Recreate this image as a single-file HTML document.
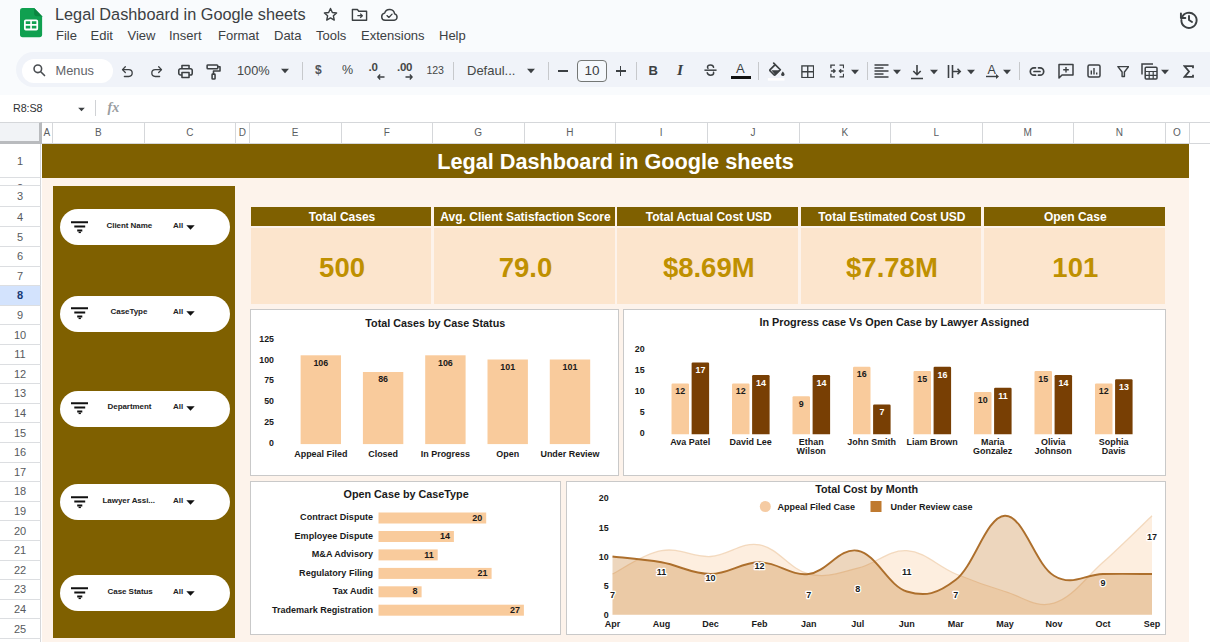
<!DOCTYPE html>
<html>
<head>
<meta charset="utf-8">
<title>Legal Dashboard in Google sheets</title>
<style>
*{box-sizing:border-box;margin:0;padding:0}
html,body{width:1210px;height:642px;overflow:hidden;background:#f9fbfd;font-family:"Liberation Sans",sans-serif;color:#1f1f1f}
.abs{position:absolute}
#app{position:relative;width:1210px;height:642px;overflow:hidden;background:#f9fbfd}
/* header */
#doctitle{left:55px;top:5.2px;font-size:16.3px;color:#3c4043;letter-spacing:0;white-space:nowrap}
.menu{top:27.8px;font-size:13px;color:#3c4043;white-space:nowrap}
#toolbar{left:16px;top:52.3px;width:1240px;height:35.2px;background:#f0f3f9;border-radius:17.6px}
#menus{left:22px;top:58.5px;width:91px;height:24px;background:#fff;border-radius:12px}
.tbtxt{font-size:13px;color:#444746;white-space:nowrap}
.sep{width:1px;height:18px;background:#c7c9cc;top:61px}
/* formula bar */
#fbar{left:0;top:95px;width:1210px;height:27px;background:#fff}
/* grid */
#grid{left:0;top:122px;width:1210px;height:520px;background:#fff}
.colh{top:121.5px;height:22px;background:#fff;border-right:1px solid #d5d7da;border-top:1px solid #d5d7da;border-bottom:1px solid #d5d7da;font-size:10px;color:#5b5e62;text-align:center;line-height:20px}
.rowh{left:0;width:41px;background:#fff;border-bottom:1px solid #dcdee1;border-right:1px solid #d5d7da;font-size:11px;color:#575a5d;text-align:center}
#sheetbg{left:42px;top:178px;width:1147px;height:464px;background:#fdf3eb}
#banner{left:42px;top:143.5px;width:1147px;height:34.5px;background:#7f6000;color:#fff;font-weight:bold;font-size:21.7px;text-align:center;line-height:35.5px}
#side{left:53px;top:185.6px;width:182px;height:452.6px;background:#7f6000}
.pill{left:59.5px;width:170.5px;height:36px;background:#fff;border-radius:18px}
.pill span{position:absolute;font-size:8px;font-weight:bold;color:#222;white-space:nowrap;top:11.5px;letter-spacing:-0.05px}
.kh{top:207px;height:18.5px;background:#7f6000;color:#fff;font-weight:bold;font-size:12px;text-align:center;line-height:20.5px;white-space:nowrap;padding-left:2px}
.kv{top:228px;height:76px;background:#fce5cd;color:#bf9000;font-weight:bold;font-size:27.5px;text-align:center;line-height:80px;padding-left:2px}
.card{background:#fff;border:1px solid #c9c9c9}
.ct{position:absolute;left:0;width:100%;text-align:center;font-weight:bold;color:#1a1a1a;white-space:nowrap}
svg text{font-family:"Liberation Sans",sans-serif;font-weight:bold}
</style>
</head>
<body>
<div id="app">
<!--HEADER-->
<!-- sheets logo -->
<svg class="abs" style="left:19.6px;top:7.4px" width="23" height="31.2" viewBox="0 0 26 34" preserveAspectRatio="none">
<path d="M3 1h13l9 9v20a3 3 0 0 1-3 3H3a3 3 0 0 1-3-3V4a3 3 0 0 1 3-3z" fill="#10a050"/>
<path d="M16 1l9 9h-6a3 3 0 0 1-3-3z" fill="#0b8541"/>
<rect x="5.5" y="14.5" width="14" height="10" rx="1" fill="none" stroke="#fff" stroke-width="2"/>
<path d="M12.5 14.5v10M5.5 19.5h14" stroke="#fff" stroke-width="1.8"/>
</svg>
<div class="abs" id="doctitle">Legal Dashboard in Google sheets</div>
<!-- star -->
<svg class="abs" style="left:322px;top:6px" width="17" height="17" viewBox="0 0 24 24" fill="none" stroke="#3c4043" stroke-width="2" stroke-linejoin="round"><path d="M12 3.5l2.6 5.6 6 .7-4.5 4.1 1.2 6-5.3-3-5.3 3 1.2-6L3.4 9.8l6-.7z"/></svg>
<!-- folder move -->
<svg class="abs" style="left:351px;top:7px" width="17" height="15" viewBox="0 0 24 20" fill="none" stroke="#3c4043" stroke-width="2" stroke-linejoin="round"><path d="M2 3h7l2 2.5h11V18H2z"/><path d="M9 11.7h6M13 8.8l3 2.9-3 2.9" stroke-width="1.8"/></svg>
<!-- cloud -->
<svg class="abs" style="left:380px;top:7px" width="19" height="15" viewBox="0 0 26 20" fill="none" stroke="#3c4043" stroke-width="2" stroke-linejoin="round" stroke-linecap="round"><path d="M7 18a5 5 0 0 1-.6-9.9A7 7 0 0 1 20 9.2a4.5 4.5 0 0 1-.6 8.8z"/><path d="M9.5 11.5l2.6 2.5 4.4-4.5" stroke-width="1.8"/></svg>
<div class="abs menu" style="left:56px">File</div>
<div class="abs menu" style="left:90.5px">Edit</div>
<div class="abs menu" style="left:127.5px">View</div>
<div class="abs menu" style="left:169px">Insert</div>
<div class="abs menu" style="left:218px">Format</div>
<div class="abs menu" style="left:274px">Data</div>
<div class="abs menu" style="left:316px">Tools</div>
<div class="abs menu" style="left:361px">Extensions</div>
<div class="abs menu" style="left:439px">Help</div>
<!-- history -->
<svg class="abs" style="left:1178px;top:9px" width="22" height="22" viewBox="0 0 24 24" fill="none" stroke="#3c4043" stroke-width="2.1" stroke-linecap="round" stroke-linejoin="round"><path d="M4.2 9.5A8.3 8.3 0 1 1 3.7 12"/><path d="M3.2 5v4.8H8" /><path d="M12 7.5V12l3.3 2.2"/></svg>

<!--TOOLBAR-->
<div class="abs" id="toolbar"></div>
<div class="abs" id="menus"></div>
<div class="abs" style="left:0;top:0.9px;width:1210px;height:0">
<svg class="abs" style="left:31.5px;top:62.3px" width="14" height="14" viewBox="0 0 24 24" fill="none" stroke="#4a4e52" stroke-width="2.7" stroke-linecap="round"><circle cx="10" cy="10" r="6.5"/><path d="M15 15l6.5 6.5"/></svg>
<div class="abs tbtxt" style="left:55.5px;top:62.3px;font-size:12.8px;color:#5f6368">Menus</div>
<!-- undo -->
<svg class="abs" style="left:120px;top:63px" width="15" height="15" viewBox="0 0 24 24" fill="none" stroke="#3c4043" stroke-width="2.1" stroke-linecap="round" stroke-linejoin="round"><path d="M8.5 4.5L4 9l4.500 4.500"/><path d="M4.500 9H14a5.500 5.500 0 0 1 0 11H7"/></svg>
<!-- redo -->
<svg class="abs" style="left:149px;top:63px" width="15" height="15" viewBox="0 0 24 24" fill="none" stroke="#3c4043" stroke-width="2.1" stroke-linecap="round" stroke-linejoin="round"><path d="M15.500 4.500L20 9l-4.500 4.500"/><path d="M19.500 9H10a5.500 5.500 0 0 0 0 11h7"/></svg>
<!-- print -->
<svg class="abs" style="left:177px;top:62px" width="17" height="17" viewBox="0 0 24 24" fill="none" stroke="#3c4043" stroke-width="2.2" stroke-linejoin="round"><path d="M7 8V3.500h10V8"/><rect x="2.500" y="8" width="19" height="9" rx="2.500"/><rect x="7" y="13.500" width="10" height="7" fill="#f0f4f9"/></svg>
<!-- paint format -->
<svg class="abs" style="left:205px;top:62px" width="17" height="18" viewBox="0 0 24 25" fill="none" stroke="#3c4043" stroke-width="2.2" stroke-linejoin="round"><rect x="3" y="2.500" width="15" height="5.500" rx="1.200"/><path d="M18 5.200h3.200v6H12v4.500"/><rect x="10" y="15.500" width="4.200" height="7" rx="1"/></svg>
<div class="abs tbtxt" style="left:237px;top:62.5px;font-size:12.8px">100%</div>
<svg class="abs" style="left:280px;top:67px" width="10" height="6" viewBox="0 0 10 6"><path d="M1 .8h8L5 5.200z" fill="#3c4043"/></svg>
<div class="abs sep" style="left:302px"></div>
<div class="abs tbtxt" style="left:315px;top:62px;font-size:12px;font-weight:bold;color:#50545a">$</div>
<div class="abs tbtxt" style="left:342px;top:62px;font-size:12.500px">%</div>
<div class="abs tbtxt" style="left:368.500px;top:60.500px;font-size:11.500px;font-weight:bold;letter-spacing:-0.3px">.0</div>
<svg class="abs" style="left:377px;top:73px" width="8" height="6" viewBox="0 0 8 6" fill="none" stroke="#3c4043" stroke-width="1.400"><path d="M7.500 3H1M3.200 .6L.9 3l2.300 2.400"/></svg>
<div class="abs tbtxt" style="left:397px;top:60.500px;font-size:11.500px;font-weight:bold;letter-spacing:-0.3px">.00</div>
<svg class="abs" style="left:405px;top:73px" width="8" height="6" viewBox="0 0 8 6" fill="none" stroke="#3c4043" stroke-width="1.400"><path d="M.5 3H7M4.800 .6L7.100 3 4.800 5.400"/></svg>
<div class="abs tbtxt" style="left:426.500px;top:63.5px;font-size:10.600px;letter-spacing:-0.2px">123</div>
<div class="abs sep" style="left:453px"></div>
<div class="abs tbtxt" style="left:467px;top:62.3px;font-size:13px">Defaul...</div>
<svg class="abs" style="left:526px;top:67px" width="10" height="6" viewBox="0 0 10 6"><path d="M1 .8h8L5 5.200z" fill="#3c4043"/></svg>
<div class="abs sep" style="left:548px"></div>
<div class="abs" style="left:558px;top:69.600px;width:10px;height:1.400px;background:#3c4043"></div>
<div class="abs" style="left:577px;top:59px;width:30px;height:22px;border:1.200px solid #747775;border-radius:4px;background:#f5f8fc;text-align:center;font-size:13.500px;line-height:20px;color:#3c4043">10</div>
<div class="abs" style="left:615.500px;top:69.500px;width:10px;height:1.600px;background:#3c4043"></div>
<div class="abs" style="left:619.700px;top:65.300px;width:1.600px;height:10px;background:#3c4043"></div>
<div class="abs sep" style="left:636px"></div>
<div class="abs tbtxt" style="left:648.500px;top:62px;font-size:13px;font-weight:bold;color:#3c4043">B</div>
<div class="abs tbtxt" style="left:677px;top:60.5px;font-size:15.5px;font-style:italic;font-family:'Liberation Serif',serif;font-weight:bold;color:#3c4043">I</div>
<!-- strikethrough -->
<svg class="abs" style="left:702.5px;top:62.6px" width="15" height="14" viewBox="0 0 16 15" fill="none" stroke="#3c4043" stroke-width="1.6" stroke-linecap="round"><path d="M11.3 4.6C11.1 3 9.800 2.100 8 2.100C6.100 2.100 4.800 3 4.800 4.400C4.800 4.900 5 5.300 5.300 5.600"/><path d="M1.500 7.700h13" stroke-linecap="butt"/><path d="M4.500 10.400C4.700 12 6.100 13 8 13C10 13 11.400 12.100 11.400 10.700C11.400 10.400 11.300 10.100 11.200 9.900"/></svg>
<!-- text color -->
<div class="abs tbtxt" style="left:736px;top:60px;font-size:13px;color:#3c4043">A</div>
<div class="abs" style="left:730.500px;top:75px;width:20px;height:2.8px;background:#111"></div>
<div class="abs sep" style="left:758px"></div>
<!-- fill color -->
<svg class="abs" style="left:767px;top:60px" width="20" height="20" viewBox="0 0 24 24"><path d="M6.500 2.500l8 8-6 6a1.200 1.200 0 0 1-1.700 0L2.300 12a1.200 1.200 0 0 1 0-1.700l6-6z" fill="none" stroke="#3c4043" stroke-width="2.100" stroke-linejoin="round" transform="translate(1.500,0)"/><path d="M3.800 11h10.800l-6.200 5.800z" fill="#3c4043" transform="translate(1.500,0)"/><path d="M19 12.500s2 2.300 2 3.600a2 2 0 0 1-4 0c0-1.300 2-3.600 2-3.600z" fill="#3c4043"/><rect x="1" y="20.500" width="20" height="3" fill="#fff"/></svg>
<!-- borders -->
<svg class="abs" style="left:800.5px;top:63.8px" width="13.5" height="13.5" viewBox="0 0 15 15" fill="none" stroke="#3c4043" stroke-width="1.500"><rect x="1" y="1" width="13" height="13"/><path d="M7.500 1v13M1 7.500h13"/></svg>
<!-- merge -->
<svg class="abs" style="left:829.5px;top:63.5px" width="14.5" height="14" viewBox="0 0 16 15" fill="none" stroke="#3c4043" stroke-width="1.500"><path d="M1 4.500V1h4.500M10.500 1H15v3.500M1 10.500V14h4.500M10.500 14H15v-3.500"/><path d="M1 7.500h4.500M3.700 5.500l2 2-2 2M15 7.500h-4.500M12.300 5.500l-2 2 2 2" stroke-width="1.400"/></svg>
<svg class="abs" style="left:850px;top:68px" width="10" height="6" viewBox="0 0 10 6"><path d="M1 .8h8L5 5.200z" fill="#3c4043"/></svg>
<div class="abs sep" style="left:867px"></div>
<!-- h align -->
<svg class="abs" style="left:874px;top:63.500px" width="15" height="14" viewBox="0 0 15 14" stroke="#3c4043" stroke-width="1.400"><path d="M.5 1h14M.5 4h9M.5 7h14M.5 10h9M.5 13h14"/></svg>
<svg class="abs" style="left:892px;top:68px" width="10" height="6" viewBox="0 0 10 6"><path d="M1 .8h8L5 5.200z" fill="#3c4043"/></svg>
<!-- v align -->
<svg class="abs" style="left:910px;top:63px" width="14" height="16" viewBox="0 0 14 16" fill="none" stroke="#3c4043" stroke-width="1.600"><path d="M7 1v9.500M3.300 7L7 10.700 10.700 7M1 14.500h12"/></svg>
<svg class="abs" style="left:929px;top:68px" width="10" height="6" viewBox="0 0 10 6"><path d="M1 .8h8L5 5.200z" fill="#3c4043"/></svg>
<!-- wrap -->
<svg class="abs" style="left:947px;top:63px" width="15" height="15" viewBox="0 0 15 15" fill="none" stroke="#3c4043" stroke-width="1.600"><path d="M1.500 1v13M5.500 1v13M5.500 7.500h7.500M10.500 4.800l2.700 2.700-2.700 2.700"/></svg>
<svg class="abs" style="left:966px;top:68px" width="10" height="6" viewBox="0 0 10 6"><path d="M1 .8h8L5 5.200z" fill="#3c4043"/></svg>
<!-- rotate -->
<div class="abs tbtxt" style="left:987.5px;top:62px;font-size:12.500px;color:#3c4043">A</div>
<svg class="abs" style="left:985.500px;top:73.500px" width="14" height="6" viewBox="0 0 14 6" fill="none" stroke="#3c4043" stroke-width="1.400"><path d="M0 2.500h11.500"/><path d="M10 0l3 2.500L10 5z" fill="#3c4043" stroke="none"/></svg>
<svg class="abs" style="left:1002px;top:68px" width="10" height="6" viewBox="0 0 10 6"><path d="M1 .8h8L5 5.200z" fill="#3c4043"/></svg>
<div class="abs sep" style="left:1019px"></div>
<!-- link -->
<svg class="abs" style="left:1029px;top:65px" width="16" height="11" viewBox="0 0 16 11" fill="none" stroke="#3c4043" stroke-width="1.700" stroke-linecap="round"><path d="M6.500 1.800H5a3.700 3.700 0 0 0 0 7.400h1.500M9.500 1.800H11a3.700 3.700 0 0 1 0 7.400H9.500M5 5.500h6"/></svg>
<!-- comment -->
<svg class="abs" style="left:1057.500px;top:62.500px" width="16" height="16" viewBox="0 0 16 16" fill="none" stroke="#3c4043" stroke-width="1.500" stroke-linejoin="round"><path d="M1 1.500h14v10.500H4L1 15z"/><path d="M8 4v5.500M5.200 6.800h5.600" stroke-width="1.400"/></svg>
<!-- chart -->
<svg class="abs" style="left:1087px;top:63.500px" width="14" height="14" viewBox="0 0 14 14" fill="none" stroke="#3c4043" stroke-width="1.500"><rect x="1" y="1" width="12" height="12" rx="1.500"/><path d="M4.300 10.500V6.500M7 10.500V4M9.700 10.500V8.500" stroke-width="1.400"/></svg>
<!-- filter -->
<svg class="abs" style="left:1116.5px;top:64px" width="12.5" height="13" viewBox="0 0 14 14" fill="none" stroke="#3c4043" stroke-width="1.600" stroke-linejoin="round"><path d="M1 1.500h12L8.300 7.500V12.500H5.700V7.500z"/></svg>
<!-- table/functions -->
<svg class="abs" style="left:1141px;top:62.500px" width="17" height="17" viewBox="0 0 17 17" fill="none" stroke="#3c4043" stroke-width="1.500"><path d="M1 11.500V1h11"/><rect x="4.200" y="4.200" width="11.800" height="11.800" rx="1"/><path d="M4.200 8.500H16M8.200 8.500V16M12.200 8.500V16M4.200 12.300H16" stroke-width="1.200"/></svg>
<svg class="abs" style="left:1160px;top:68px" width="10" height="6" viewBox="0 0 10 6"><path d="M1 .8h8L5 5.200z" fill="#3c4043"/></svg>
<!-- sigma -->
<svg class="abs" style="left:1183px;top:64px" width="11" height="13" viewBox="0 0 11 13" fill="none" stroke="#3c4043" stroke-width="1.800" stroke-linejoin="miter"><path d="M10 3.200V1.200H1.500L6 6.500 1.500 11.800H10V9.800"/></svg>

</div>
<!--FBAR-->
<!--GRID-->
<div class="abs" id="fbar"></div>
<div class="abs" id="grid"></div>
<div class="abs" style="left:0;top:122px;width:42px;height:22px;background:#f1f3f6;border-right:3px solid #b9bbbe;border-bottom:3px solid #b9bbbe;border-top:1px solid #d5d7da"></div>
<div class="abs colh" style="left:41.5px;width:11.5px">A</div>
<div class="abs colh" style="left:53.0px;width:91.5px">B</div>
<div class="abs colh" style="left:144.5px;width:91.5px">C</div>
<div class="abs colh" style="left:236.0px;width:13.5px">D</div>
<div class="abs colh" style="left:249.5px;width:92.0px">E</div>
<div class="abs colh" style="left:341.5px;width:91.5px">F</div>
<div class="abs colh" style="left:433.0px;width:91.5px">G</div>
<div class="abs colh" style="left:524.5px;width:91.5px">H</div>
<div class="abs colh" style="left:616.0px;width:91.5px">I</div>
<div class="abs colh" style="left:707.5px;width:92.0px">J</div>
<div class="abs colh" style="left:799.5px;width:91.5px">K</div>
<div class="abs colh" style="left:891.0px;width:91.5px">L</div>
<div class="abs colh" style="left:982.5px;width:91.5px">M</div>
<div class="abs colh" style="left:1074.0px;width:91.5px">N</div>
<div class="abs colh" style="left:1165.5px;width:24.0px">O</div>
<div class="abs colh" style="left:1189.5px;width:21px;border-right:none"></div>
<div class="abs rowh" style="top:144.0px;height:34.0px;line-height:34.0px;">1</div>
<div class="abs rowh" style="top:178.0px;height:7.5px;line-height:7.5px;overflow:hidden;line-height:12px;padding-top:3.5px;">2</div>
<div class="abs rowh" style="top:185.5px;height:21.5px;line-height:21.5px;">3</div>
<div class="abs rowh" style="top:207.0px;height:20.0px;line-height:20.0px;">4</div>
<div class="abs rowh" style="top:227.0px;height:20.0px;line-height:20.0px;">5</div>
<div class="abs rowh" style="top:247.0px;height:19.5px;line-height:19.5px;">6</div>
<div class="abs rowh" style="top:266.5px;height:19.5px;line-height:19.5px;">7</div>
<div class="abs rowh" style="top:286.0px;height:19.5px;line-height:19.5px;background:#d3e3fd;color:#173a75;font-weight:bold;">8</div>
<div class="abs rowh" style="top:305.5px;height:19.5px;line-height:19.5px;">9</div>
<div class="abs rowh" style="top:325.0px;height:20.0px;line-height:20.0px;">10</div>
<div class="abs rowh" style="top:345.0px;height:19.5px;line-height:19.5px;">11</div>
<div class="abs rowh" style="top:364.5px;height:19.5px;line-height:19.5px;">12</div>
<div class="abs rowh" style="top:384.0px;height:19.5px;line-height:19.5px;">13</div>
<div class="abs rowh" style="top:403.5px;height:19.5px;line-height:19.5px;">14</div>
<div class="abs rowh" style="top:423.0px;height:20.0px;line-height:20.0px;">15</div>
<div class="abs rowh" style="top:443.0px;height:19.5px;line-height:19.5px;">16</div>
<div class="abs rowh" style="top:462.5px;height:19.5px;line-height:19.5px;">17</div>
<div class="abs rowh" style="top:482.0px;height:19.5px;line-height:19.5px;">18</div>
<div class="abs rowh" style="top:501.5px;height:19.5px;line-height:19.5px;">19</div>
<div class="abs rowh" style="top:521.0px;height:20.0px;line-height:20.0px;">20</div>
<div class="abs rowh" style="top:541.0px;height:19.5px;line-height:19.5px;">21</div>
<div class="abs rowh" style="top:560.5px;height:19.5px;line-height:19.5px;">22</div>
<div class="abs rowh" style="top:580.0px;height:19.5px;line-height:19.5px;">23</div>
<div class="abs rowh" style="top:599.5px;height:19.5px;line-height:19.5px;">24</div>
<div class="abs rowh" style="top:619.0px;height:20.0px;line-height:20.0px;">25</div>
<div class="abs rowh" style="top:639.0px;height:19.5px;line-height:19.5px;">26</div>
<div class="abs rowh" style="top:658.5px;height:19.5px;line-height:19.5px;">27</div>
<div class="abs" id="sheetbg"></div>
<div class="abs" id="banner">Legal Dashboard in Google sheets</div>
<div class="abs" style="left:13px;top:101.5px;font-size:10.8px;color:#303134;letter-spacing:-0.1px">R8:S8</div>
<svg class="abs" style="left:77px;top:106.5px" width="9" height="5" viewBox="0 0 10 6"><path d="M1 .8h8L5 5.200z" fill="#3c4043"/></svg>
<div class="abs" style="left:95px;top:100px;width:1px;height:16px;background:#d0d2d5"></div>
<div class="abs" style="left:107.5px;top:100px;font-size:14px;font-style:italic;font-weight:bold;font-family:'Liberation Serif',serif;color:#9a9da1">fx</div>

<!--SIDE-->
<div class="abs" id="side"></div>
<div class="abs pill" style="top:209px"><svg style="position:absolute;left:11px;top:11.5px" width="17.5" height="13" viewBox="0 0 17.5 13" stroke="#111" stroke-width="2" stroke-linecap="butt"><path d="M0 1.200h17.500M3.300 5.500h10.900M6.200 9.600h5.100"/><path d="M7.600 11.400h2.300" stroke-width="1.400"/></svg><span style="left:47px">Client Name</span><span style="left:113.500px">All</span><svg style="position:absolute;left:126px;top:15.5px" width="9" height="5" viewBox="0 0 9 5"><path d="M.3 .3h8.400L4.500 4.700z" fill="#111"/></svg></div>
<div class="abs pill" style="top:295.5px"><svg style="position:absolute;left:11px;top:11.5px" width="17.5" height="13" viewBox="0 0 17.5 13" stroke="#111" stroke-width="2" stroke-linecap="butt"><path d="M0 1.200h17.500M3.300 5.500h10.900M6.200 9.600h5.100"/><path d="M7.600 11.400h2.300" stroke-width="1.400"/></svg><span style="left:51px">CaseType</span><span style="left:113.500px">All</span><svg style="position:absolute;left:126px;top:15.5px" width="9" height="5" viewBox="0 0 9 5"><path d="M.3 .3h8.400L4.500 4.700z" fill="#111"/></svg></div>
<div class="abs pill" style="top:390.5px"><svg style="position:absolute;left:11px;top:11.5px" width="17.5" height="13" viewBox="0 0 17.5 13" stroke="#111" stroke-width="2" stroke-linecap="butt"><path d="M0 1.200h17.500M3.300 5.500h10.900M6.200 9.600h5.100"/><path d="M7.600 11.400h2.300" stroke-width="1.400"/></svg><span style="left:48px">Department</span><span style="left:113.500px">All</span><svg style="position:absolute;left:126px;top:15.5px" width="9" height="5" viewBox="0 0 9 5"><path d="M.3 .3h8.400L4.500 4.700z" fill="#111"/></svg></div>
<div class="abs pill" style="top:484px"><svg style="position:absolute;left:11px;top:11.5px" width="17.5" height="13" viewBox="0 0 17.5 13" stroke="#111" stroke-width="2" stroke-linecap="butt"><path d="M0 1.200h17.500M3.300 5.500h10.900M6.200 9.600h5.100"/><path d="M7.600 11.400h2.300" stroke-width="1.400"/></svg><span style="left:43px">Lawyer Assi...</span><span style="left:113.500px">All</span><svg style="position:absolute;left:126px;top:15.5px" width="9" height="5" viewBox="0 0 9 5"><path d="M.3 .3h8.400L4.500 4.700z" fill="#111"/></svg></div>
<div class="abs pill" style="top:575px"><svg style="position:absolute;left:11px;top:11.5px" width="17.5" height="13" viewBox="0 0 17.5 13" stroke="#111" stroke-width="2" stroke-linecap="butt"><path d="M0 1.200h17.500M3.300 5.500h10.900M6.200 9.600h5.100"/><path d="M7.600 11.400h2.300" stroke-width="1.400"/></svg><span style="left:48px">Case Status</span><span style="left:113.500px">All</span><svg style="position:absolute;left:126px;top:15.5px" width="9" height="5" viewBox="0 0 9 5"><path d="M.3 .3h8.400L4.500 4.700z" fill="#111"/></svg></div>
<!--KPI-->
<div class="abs kh" style="left:250.8px;width:180.5px">Total Cases</div>
<div class="abs kv" style="left:250.8px;width:180.5px">500</div>
<div class="abs kh" style="left:434px;width:181px">Avg. Client Satisfaction Score</div>
<div class="abs kv" style="left:434px;width:181px">79.0</div>
<div class="abs kh" style="left:617.3px;width:180.9000000000001px">Total Actual Cost USD</div>
<div class="abs kv" style="left:617.3px;width:180.9000000000001px">$8.69M</div>
<div class="abs kh" style="left:800.6px;width:180.69999999999993px">Total Estimated Cost USD</div>
<div class="abs kv" style="left:800.6px;width:180.69999999999993px">$7.78M</div>
<div class="abs kh" style="left:983.6px;width:181.39999999999998px">Open Case</div>
<div class="abs kv" style="left:983.6px;width:181.39999999999998px">101</div>
<!--CH1-->
<div class="abs card" style="left:250px;top:309px;width:369px;height:166.7px"><svg width="367" height="164.7" viewBox="251 310 367 164.7" style="display:block">
<text x="435.3" y="327.0" font-size="10.8" text-anchor="middle" fill="#1a1a1a" >Total Cases by Case Status</text>
<text x="274.0" y="446.0" font-size="8.8" text-anchor="end" fill="#1a1a1a" >0</text>
<text x="274.0" y="425.2" font-size="8.8" text-anchor="end" fill="#1a1a1a" >25</text>
<text x="274.0" y="404.4" font-size="8.8" text-anchor="end" fill="#1a1a1a" >50</text>
<text x="274.0" y="383.5" font-size="8.8" text-anchor="end" fill="#1a1a1a" >75</text>
<text x="274.0" y="362.7" font-size="8.8" text-anchor="end" fill="#1a1a1a" >100</text>
<text x="274.0" y="341.9" font-size="8.8" text-anchor="end" fill="#1a1a1a" >125</text>
<rect x="300.6" y="355.3" width="40.4" height="88.8" fill="#f9cb9c"/>
<text x="320.8" y="365.7" font-size="8.9" text-anchor="middle" fill="#1a1a1a" >106</text>
<text x="320.8" y="456.7" font-size="8.95" text-anchor="middle" fill="#1a1a1a" >Appeal Filed</text>
<rect x="362.9" y="372.0" width="40.4" height="72.1" fill="#f9cb9c"/>
<text x="383.1" y="382.4" font-size="8.9" text-anchor="middle" fill="#1a1a1a" >86</text>
<text x="383.1" y="456.7" font-size="8.95" text-anchor="middle" fill="#1a1a1a" >Closed</text>
<rect x="425.2" y="355.3" width="40.4" height="88.8" fill="#f9cb9c"/>
<text x="445.4" y="365.7" font-size="8.9" text-anchor="middle" fill="#1a1a1a" >106</text>
<text x="445.4" y="456.7" font-size="8.95" text-anchor="middle" fill="#1a1a1a" >In Progress</text>
<rect x="487.5" y="359.5" width="40.4" height="84.6" fill="#f9cb9c"/>
<text x="507.7" y="369.9" font-size="8.9" text-anchor="middle" fill="#1a1a1a" >101</text>
<text x="507.7" y="456.7" font-size="8.95" text-anchor="middle" fill="#1a1a1a" >Open</text>
<rect x="549.8" y="359.5" width="40.4" height="84.6" fill="#f9cb9c"/>
<text x="570.0" y="369.9" font-size="8.9" text-anchor="middle" fill="#1a1a1a" >101</text>
<text x="570.0" y="456.7" font-size="8.95" text-anchor="middle" fill="#1a1a1a" >Under Review</text>
</svg></div>
<!--CH2-->
<div class="abs card" style="left:623px;top:309px;width:543px;height:166.7px"><svg width="541" height="164.7" viewBox="624 310 541 164.7" style="display:block">
<text x="894.3" y="325.9" font-size="10.85" text-anchor="middle" fill="#1a1a1a" >In Progress case Vs Open Case by Lawyer Assigned</text>
<text x="644.7" y="436.1" font-size="8.9" text-anchor="end" fill="#1a1a1a" >0</text>
<text x="644.7" y="415.1" font-size="8.9" text-anchor="end" fill="#1a1a1a" >5</text>
<text x="644.7" y="394.1" font-size="8.9" text-anchor="end" fill="#1a1a1a" >10</text>
<text x="644.7" y="373.0" font-size="8.9" text-anchor="end" fill="#1a1a1a" >15</text>
<text x="644.7" y="352.0" font-size="8.9" text-anchor="end" fill="#1a1a1a" >20</text>
<path d="M671.5 434.3V384.7q0 -1.2 1.2 -1.2h15.1q1.2 0 1.2 1.2V434.3z" fill="#f9cb9c"/>
<path d="M691.6 434.3V363.7q0 -1.2 1.2 -1.2h15.1q1.2 0 1.2 1.2V434.3z" fill="#783f04"/>
<text x="680.3" y="394.3" font-size="8.9" text-anchor="middle" fill="#1a1a1a" >12</text>
<text x="700.4" y="373.4" font-size="8.9" text-anchor="middle" fill="#fff" >17</text>
<text x="690.2" y="445.2" font-size="8.95" text-anchor="middle" fill="#1a1a1a" >Ava Patel</text>
<path d="M732.0 434.3V384.7q0 -1.2 1.2 -1.2h15.1q1.2 0 1.2 1.2V434.3z" fill="#f9cb9c"/>
<path d="M752.1 434.3V376.3q0 -1.2 1.2 -1.2h15.1q1.2 0 1.2 1.2V434.3z" fill="#783f04"/>
<text x="740.8" y="394.3" font-size="8.9" text-anchor="middle" fill="#1a1a1a" >12</text>
<text x="760.9" y="386.0" font-size="8.9" text-anchor="middle" fill="#fff" >14</text>
<text x="750.7" y="445.2" font-size="8.95" text-anchor="middle" fill="#1a1a1a" >David Lee</text>
<path d="M792.5 434.3V397.4q0 -1.2 1.2 -1.2h15.1q1.2 0 1.2 1.2V434.3z" fill="#f9cb9c"/>
<path d="M812.6 434.3V376.3q0 -1.2 1.2 -1.2h15.1q1.2 0 1.2 1.2V434.3z" fill="#783f04"/>
<text x="801.3" y="407.0" font-size="8.9" text-anchor="middle" fill="#1a1a1a" >9</text>
<text x="821.4" y="386.0" font-size="8.9" text-anchor="middle" fill="#fff" >14</text>
<text x="811.2" y="445.2" font-size="8.95" text-anchor="middle" fill="#1a1a1a" >Ethan</text>
<text x="811.2" y="454.1" font-size="8.95" text-anchor="middle" fill="#1a1a1a" >Wilson</text>
<path d="M853.0 434.3V367.9q0 -1.2 1.2 -1.2h15.1q1.2 0 1.2 1.2V434.3z" fill="#f9cb9c"/>
<path d="M873.1 434.3V405.8q0 -1.2 1.2 -1.2h15.1q1.2 0 1.2 1.2V434.3z" fill="#783f04"/>
<text x="861.8" y="377.5" font-size="8.9" text-anchor="middle" fill="#1a1a1a" >16</text>
<text x="881.9" y="415.5" font-size="8.9" text-anchor="middle" fill="#fff" >7</text>
<text x="871.7" y="445.2" font-size="8.95" text-anchor="middle" fill="#1a1a1a" >John Smith</text>
<path d="M913.5 434.3V372.1q0 -1.2 1.2 -1.2h15.1q1.2 0 1.2 1.2V434.3z" fill="#f9cb9c"/>
<path d="M933.6 434.3V367.9q0 -1.2 1.2 -1.2h15.1q1.2 0 1.2 1.2V434.3z" fill="#783f04"/>
<text x="922.3" y="381.7" font-size="8.9" text-anchor="middle" fill="#1a1a1a" >15</text>
<text x="942.4" y="377.6" font-size="8.9" text-anchor="middle" fill="#fff" >16</text>
<text x="932.2" y="445.2" font-size="8.95" text-anchor="middle" fill="#1a1a1a" >Liam Brown</text>
<path d="M974.0 434.3V393.1q0 -1.2 1.2 -1.2h15.1q1.2 0 1.2 1.2V434.3z" fill="#f9cb9c"/>
<path d="M994.1 434.3V388.9q0 -1.2 1.2 -1.2h15.1q1.2 0 1.2 1.2V434.3z" fill="#783f04"/>
<text x="982.8" y="402.8" font-size="8.9" text-anchor="middle" fill="#1a1a1a" >10</text>
<text x="1002.9" y="398.6" font-size="8.9" text-anchor="middle" fill="#fff" >11</text>
<text x="992.7" y="445.2" font-size="8.95" text-anchor="middle" fill="#1a1a1a" >Maria</text>
<text x="992.7" y="454.1" font-size="8.95" text-anchor="middle" fill="#1a1a1a" >Gonzalez</text>
<path d="M1034.5 434.3V372.1q0 -1.2 1.2 -1.2h15.1q1.2 0 1.2 1.2V434.3z" fill="#f9cb9c"/>
<path d="M1054.6 434.3V376.3q0 -1.2 1.2 -1.2h15.1q1.2 0 1.2 1.2V434.3z" fill="#783f04"/>
<text x="1043.3" y="381.7" font-size="8.9" text-anchor="middle" fill="#1a1a1a" >15</text>
<text x="1063.4" y="386.0" font-size="8.9" text-anchor="middle" fill="#fff" >14</text>
<text x="1053.2" y="445.2" font-size="8.95" text-anchor="middle" fill="#1a1a1a" >Olivia</text>
<text x="1053.2" y="454.1" font-size="8.95" text-anchor="middle" fill="#1a1a1a" >Johnson</text>
<path d="M1095.0 434.3V384.7q0 -1.2 1.2 -1.2h15.1q1.2 0 1.2 1.2V434.3z" fill="#f9cb9c"/>
<path d="M1115.1 434.3V380.5q0 -1.2 1.2 -1.2h15.1q1.2 0 1.2 1.2V434.3z" fill="#783f04"/>
<text x="1103.8" y="394.3" font-size="8.9" text-anchor="middle" fill="#1a1a1a" >12</text>
<text x="1123.9" y="390.2" font-size="8.9" text-anchor="middle" fill="#fff" >13</text>
<text x="1113.7" y="445.2" font-size="8.95" text-anchor="middle" fill="#1a1a1a" >Sophia</text>
<text x="1113.7" y="454.1" font-size="8.95" text-anchor="middle" fill="#1a1a1a" >Davis</text>
</svg></div>
<!--CH3-->
<div class="abs card" style="left:250px;top:480.5px;width:311px;height:154.5px"><svg width="309" height="152.5" viewBox="251 481.5 309 152.5" style="display:block">
<text x="406.1" y="497.0" font-size="10.8" text-anchor="middle" fill="#1a1a1a" >Open Case by CaseType</text>
<rect x="378.5" y="512.0" width="107.7" height="11" fill="#f9cb9c"/>
<text x="373.0" y="519.8" font-size="9.05" text-anchor="end" fill="#1a1a1a" >Contract Dispute</text>
<text x="482.2" y="520.1" font-size="9" text-anchor="end" fill="#1a1a1a" >20</text>
<rect x="378.5" y="530.5" width="75.4" height="11" fill="#f9cb9c"/>
<text x="373.0" y="538.2" font-size="9.05" text-anchor="end" fill="#1a1a1a" >Employee Dispute</text>
<text x="449.9" y="538.5" font-size="9" text-anchor="end" fill="#1a1a1a" >14</text>
<rect x="378.5" y="548.9" width="59.2" height="11" fill="#f9cb9c"/>
<text x="373.0" y="556.7" font-size="9.05" text-anchor="end" fill="#1a1a1a" >M&amp;A Advisory</text>
<text x="433.7" y="557.0" font-size="9" text-anchor="end" fill="#1a1a1a" >11</text>
<rect x="378.5" y="567.4" width="113.1" height="11" fill="#f9cb9c"/>
<text x="373.0" y="575.1" font-size="9.05" text-anchor="end" fill="#1a1a1a" >Regulatory Filing</text>
<text x="487.6" y="575.4" font-size="9" text-anchor="end" fill="#1a1a1a" >21</text>
<rect x="378.5" y="585.8" width="43.1" height="11" fill="#f9cb9c"/>
<text x="373.0" y="593.6" font-size="9.05" text-anchor="end" fill="#1a1a1a" >Tax Audit</text>
<text x="417.6" y="593.9" font-size="9" text-anchor="end" fill="#1a1a1a" >8</text>
<rect x="378.5" y="604.2" width="145.4" height="11" fill="#f9cb9c"/>
<text x="373.0" y="612.0" font-size="9.05" text-anchor="end" fill="#1a1a1a" >Trademark Registration</text>
<text x="519.9" y="612.3" font-size="9" text-anchor="end" fill="#1a1a1a" >27</text>
</svg></div>
<!--CH4-->
<div class="abs card" style="left:566px;top:480.5px;width:600px;height:154.5px"><svg width="598" height="152.5" viewBox="567 481.5 598 152.5" style="display:block">
<text x="866.7" y="492.6" font-size="10.8" text-anchor="middle" fill="#1a1a1a" >Total Cost by Month</text>
<circle cx="765.3" cy="506" r="5.5" fill="#f5cba3"/>
<text x="777.6" y="509.3" font-size="9" text-anchor="start" fill="#1a1a1a" >Appeal Filed Case</text>
<rect x="870.5" y="500.5" width="11" height="11" fill="#bf7a30"/>
<text x="890.4" y="509.3" font-size="9" text-anchor="start" fill="#1a1a1a" >Under Review case</text>
<text x="608.6" y="617.5" font-size="8.9" text-anchor="end" fill="#1a1a1a" >0</text>
<text x="608.6" y="588.4" font-size="8.9" text-anchor="end" fill="#1a1a1a" >5</text>
<text x="608.6" y="559.2" font-size="8.9" text-anchor="end" fill="#1a1a1a" >10</text>
<text x="608.6" y="530.0" font-size="8.9" text-anchor="end" fill="#1a1a1a" >15</text>
<text x="608.6" y="500.9" font-size="8.9" text-anchor="end" fill="#1a1a1a" >20</text>
<path d="M612.5 573.5C621.8 569.1 642.9 553.5 661.5 550.2C680.2 546.8 692.0 557.1 710.6 556.0C729.2 554.9 741.0 541.0 759.6 544.3C778.3 547.7 790.1 569.1 808.7 573.5C827.3 577.9 839.1 572.1 857.8 567.7C876.4 563.2 888.2 549.1 906.8 550.2C925.4 551.3 937.2 565.7 955.8 573.5C974.5 581.2 986.3 585.4 1004.9 591.0C1023.5 596.5 1035.3 608.2 1054.0 602.6C1072.6 597.1 1084.4 578.4 1103.0 561.8C1121.6 545.2 1142.7 524.1 1152.0 515.2L1152.0 614.3 L612.5 614.3Z" fill="#f9cb9c" fill-opacity="0.32"/>
<path d="M612.5 573.5C621.8 569.1 642.9 553.5 661.5 550.2C680.2 546.8 692.0 557.1 710.6 556.0C729.2 554.9 741.0 541.0 759.6 544.3C778.3 547.7 790.1 569.1 808.7 573.5C827.3 577.9 839.1 572.1 857.8 567.7C876.4 563.2 888.2 549.1 906.8 550.2C925.4 551.3 937.2 565.7 955.8 573.5C974.5 581.2 986.3 585.4 1004.9 591.0C1023.5 596.5 1035.3 608.2 1054.0 602.6C1072.6 597.1 1084.4 578.4 1103.0 561.8C1121.6 545.2 1142.7 524.1 1152.0 515.2" fill="none" stroke="#f1d3b5" stroke-width="1.3" stroke-opacity="0.85"/>
<path d="M612.5 556.0C621.8 557.1 642.9 558.5 661.5 561.8C680.2 565.2 692.0 573.5 710.6 573.5C729.2 573.5 741.0 561.8 759.6 561.8C778.3 561.8 790.1 575.7 808.7 573.5C827.3 571.3 839.1 546.8 857.8 550.2C876.4 553.5 888.2 585.4 906.8 591.0C925.4 596.5 937.2 593.7 955.8 579.3C974.5 564.9 986.3 516.0 1004.9 515.2C1023.5 514.4 1035.3 564.2 1054.0 575.2C1072.6 586.3 1084.4 573.8 1103.0 573.5C1121.6 573.2 1142.7 573.5 1152.0 573.5L1152.0 614.3 L612.5 614.3Z" fill="#c37626" fill-opacity="0.3"/>
<path d="M612.5 556.0C621.8 557.1 642.9 558.5 661.5 561.8C680.2 565.2 692.0 573.5 710.6 573.5C729.2 573.5 741.0 561.8 759.6 561.8C778.3 561.8 790.1 575.7 808.7 573.5C827.3 571.3 839.1 546.8 857.8 550.2C876.4 553.5 888.2 585.4 906.8 591.0C925.4 596.5 937.2 593.7 955.8 579.3C974.5 564.9 986.3 516.0 1004.9 515.2C1023.5 514.4 1035.3 564.2 1054.0 575.2C1072.6 586.3 1084.4 573.8 1103.0 573.5C1121.6 573.2 1142.7 573.5 1152.0 573.5" fill="none" stroke="#ad6f2c" stroke-width="1.9"/>
<text x="612.5" y="597.6" font-size="9" text-anchor="middle" fill="#1a1a1a" stroke="#fff" stroke-width="2.6" paint-order="stroke" stroke-linejoin="round">7</text>
<text x="661.5" y="574.3" font-size="9" text-anchor="middle" fill="#1a1a1a" stroke="#fff" stroke-width="2.6" paint-order="stroke" stroke-linejoin="round">11</text>
<text x="710.6" y="580.1" font-size="9" text-anchor="middle" fill="#1a1a1a" stroke="#fff" stroke-width="2.6" paint-order="stroke" stroke-linejoin="round">10</text>
<text x="759.6" y="568.4" font-size="9" text-anchor="middle" fill="#1a1a1a" stroke="#fff" stroke-width="2.6" paint-order="stroke" stroke-linejoin="round">12</text>
<text x="808.7" y="597.6" font-size="9" text-anchor="middle" fill="#1a1a1a" stroke="#fff" stroke-width="2.6" paint-order="stroke" stroke-linejoin="round">7</text>
<text x="857.8" y="591.8" font-size="9" text-anchor="middle" fill="#1a1a1a" stroke="#fff" stroke-width="2.6" paint-order="stroke" stroke-linejoin="round">8</text>
<text x="906.8" y="574.3" font-size="9" text-anchor="middle" fill="#1a1a1a" stroke="#fff" stroke-width="2.6" paint-order="stroke" stroke-linejoin="round">11</text>
<text x="955.8" y="597.6" font-size="9" text-anchor="middle" fill="#1a1a1a" stroke="#fff" stroke-width="2.6" paint-order="stroke" stroke-linejoin="round">7</text>
<text x="1103.0" y="585.9" font-size="9" text-anchor="middle" fill="#1a1a1a" stroke="#fff" stroke-width="2.6" paint-order="stroke" stroke-linejoin="round">9</text>
<text x="1152.0" y="539.3" font-size="9" text-anchor="middle" fill="#1a1a1a" stroke="#fff" stroke-width="2.6" paint-order="stroke" stroke-linejoin="round">17</text>
<text x="612.5" y="626.3" font-size="9" text-anchor="middle" fill="#1a1a1a" >Apr</text>
<text x="661.5" y="626.3" font-size="9" text-anchor="middle" fill="#1a1a1a" >Aug</text>
<text x="710.6" y="626.3" font-size="9" text-anchor="middle" fill="#1a1a1a" >Dec</text>
<text x="759.6" y="626.3" font-size="9" text-anchor="middle" fill="#1a1a1a" >Feb</text>
<text x="808.7" y="626.3" font-size="9" text-anchor="middle" fill="#1a1a1a" >Jan</text>
<text x="857.8" y="626.3" font-size="9" text-anchor="middle" fill="#1a1a1a" >Jul</text>
<text x="906.8" y="626.3" font-size="9" text-anchor="middle" fill="#1a1a1a" >Jun</text>
<text x="955.8" y="626.3" font-size="9" text-anchor="middle" fill="#1a1a1a" >Mar</text>
<text x="1004.9" y="626.3" font-size="9" text-anchor="middle" fill="#1a1a1a" >May</text>
<text x="1054.0" y="626.3" font-size="9" text-anchor="middle" fill="#1a1a1a" >Nov</text>
<text x="1103.0" y="626.3" font-size="9" text-anchor="middle" fill="#1a1a1a" >Oct</text>
<text x="1152.0" y="626.3" font-size="9" text-anchor="middle" fill="#1a1a1a" >Sep</text>
</svg></div>
</div>
</body>
</html>
